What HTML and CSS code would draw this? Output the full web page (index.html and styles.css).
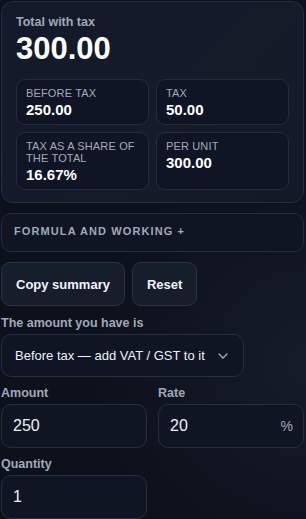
FILE: index.html
```html
<!DOCTYPE html>
<html lang="en">
<head>
<meta charset="utf-8">
<title>VAT / GST calculator</title>
<link rel="stylesheet" href="styles.css">
</head>
<body>
<div class="page">
  <section class="result">
    <div class="result-label">Total with tax</div>
    <div class="result-value">300.00</div>
    <div class="stats">
      <div class="stat">
        <div class="stat-label">Before tax</div>
        <div class="stat-value">250.00</div>
      </div>
      <div class="stat">
        <div class="stat-label">Tax</div>
        <div class="stat-value">50.00</div>
      </div>
      <div class="stat">
        <div class="stat-label">Tax as a share of the total</div>
        <div class="stat-value">16.67%</div>
      </div>
      <div class="stat">
        <div class="stat-label">Per unit</div>
        <div class="stat-value">300.00</div>
      </div>
    </div>
  </section>

  <section class="formula">Formula and working +</section>

  <div class="actions">
    <button class="btn" type="button">Copy summary</button>
    <button class="btn" type="button">Reset</button>
  </div>

  <div class="form">
    <div class="field">
      <label class="field-label" for="mode">The amount you have is</label>
      <div class="select">
        <select id="mode" class="select-input">
          <option>Before tax — add VAT / GST to it</option>
        </select>
        <svg class="chevron" width="10" height="6" viewBox="0 0 10 6" aria-hidden="true"><path d="M1 1l4 4 4-4" fill="none" stroke="#a3abba" stroke-width="1.4" stroke-linecap="round" stroke-linejoin="round"/></svg>
      </div>
    </div>

    <div class="row">
      <div class="field">
        <label class="field-label" for="amount">Amount</label>
        <div class="input"><input id="amount" class="input-el" value="250"></div>
      </div>
      <div class="field">
        <label class="field-label" for="rate">Rate</label>
        <div class="input"><input id="rate" class="input-el" value="20"><span class="suffix">%</span></div>
      </div>
    </div>

    <div class="row">
      <div class="field">
        <label class="field-label" for="qty">Quantity</label>
        <div class="input"><input id="qty" class="input-el" value="1"></div>
      </div>
    </div>
  </div>
</div>
</body>
</html>
```

FILE: styles.css
```css
* { box-sizing: border-box; }

html, body {
  margin: 0;
  padding: 0;
}

body {
  background-color: #0c111c;
  background-image:
    radial-gradient(circle at 100% 70%, rgba(40, 48, 62, 0.35), rgba(12, 17, 28, 0) 45%);
  font-family: "Liberation Sans", Arial, sans-serif;
  color: #f1f4f9;
  min-height: 519px;
}

.page {
  padding: 1px 2px 0 1px;
}

.result {
  border: 1px solid #252e40;
  border-radius: 12px;
  background: linear-gradient(135deg, #121a2b 0%, #151b29 60%, #131926 100%);
  padding: 12px 14px 12px;
}

.result-label {
  font-size: 12.5px;
  line-height: 16px;
  font-weight: 700;
  color: #a1a9b8;
}

.result-value {
  margin-top: 2px;
  font-size: 31px;
  line-height: 34px;
  font-weight: 700;
  color: #ffffff;
}

.stats {
  margin-top: 13px;
  display: grid;
  grid-template-columns: 1fr 1fr;
  gap: 7px;
}

.stat {
  border: 1px solid #242d3f;
  border-radius: 9px;
  background: #0f1524;
  padding: 7px 9px 5px;
}

.stat-label {
  font-size: 11px;
  line-height: 12px;
  letter-spacing: 0.15px;
  text-transform: uppercase;
  color: #a3abba;
}

.stat-value {
  margin-top: 2px;
  font-size: 15px;
  line-height: 18px;
  font-weight: 700;
  color: #ffffff;
}

.formula {
  margin-top: 10px;
  border: 1px solid #232c3d;
  border-radius: 10px;
  background: #0f1523;
  padding: 9px 12px 11px;
  font-size: 11px;
  line-height: 17px;
  font-weight: 700;
  letter-spacing: 1.1px;
  text-transform: uppercase;
  color: #a1a9b8;
}

.actions {
  margin-top: 10px;
  display: flex;
  gap: 7px;
}

.btn {
  height: 44px;
  padding: 0 14px;
  border: 1px solid #2a3446;
  border-radius: 9px;
  background: #161d2b;
  color: #f1f4f9;
  font-family: "Liberation Sans", Arial, sans-serif;
  font-size: 13px;
  font-weight: 700;
}

.form {
  margin-top: 10px;
  display: flex;
  flex-direction: column;
  gap: 9px;
}

.field {
  min-width: 0;
  display: flex;
  flex-direction: column;
  gap: 3px;
}

.field-label {
  font-size: 12.5px;
  line-height: 15px;
  font-weight: 700;
  color: #a1a9b8;
}

.select {
  align-self: flex-start;
  height: 43px;
  display: flex;
  align-items: center;
  gap: 12px;
  padding: 0 15px 0 13px;
  border: 1px solid #262f41;
  border-radius: 10px;
  background: #0f1523;
}

.select-input {
  appearance: none;
  -webkit-appearance: none;
  border: 0;
  background: transparent;
  padding: 0;
  margin: 0;
  color: #eef1f6;
  font-family: "Liberation Sans", Arial, sans-serif;
  font-size: 13px;
  outline: none;
}

.chevron {
  display: block;
  flex: none;
}

.row {
  display: grid;
  grid-template-columns: minmax(0, 1fr) minmax(0, 1fr);
  gap: 11px;
}

.input {
  height: 44px;
  display: flex;
  align-items: center;
  padding: 0 10px 0 11px;
  border: 1px solid #262f41;
  border-radius: 10px;
  background: #0f1523;
}

.input-el {
  flex: 1;
  width: 0;
  min-width: 0;
  border: 0;
  background: transparent;
  padding: 0;
  margin: 0;
  color: #eef1f6;
  font-family: "Liberation Sans", Arial, sans-serif;
  font-size: 16px;
  outline: none;
}

.suffix {
  flex: none;
  font-size: 14px;
  color: #a1a9b8;
}
```
